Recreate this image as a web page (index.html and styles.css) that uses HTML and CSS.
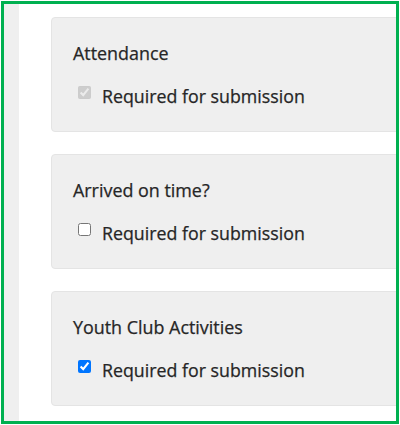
FILE: index.html
```html
<!DOCTYPE html>
<html>
<head>
<meta charset="utf-8">
<link rel="stylesheet" href="styles.css">
</head>
<body>
<div class="frame">
  <div class="sidebar"></div>
  <div class="content">
    <div class="card">
      <div class="title">Attendance</div>
      <label class="req"><input type="checkbox" checked disabled><span>Required for submission</span></label>
    </div>
    <div class="card">
      <div class="title">Arrived on time?</div>
      <label class="req"><input type="checkbox"><span>Required for submission</span></label>
    </div>
    <div class="card">
      <div class="title">Youth Club Activities</div>
      <label class="req"><input type="checkbox" checked><span>Required for submission</span></label>
    </div>
  </div>
</div>
</body>
</html>
```
FILE: styles.css
```css
html, body {
  margin: 0;
  padding: 0;
  background: #fff;
}
body {
  padding: 1px;
  width: 400px;
  height: 425px;
  box-sizing: border-box;
  font-family: "Open Sans", "Liberation Sans", sans-serif;
  color: #262626;
}
.frame {
  box-sizing: border-box;
  height: 423px;
  width: 398px;
  border: 3px solid #00b050;
  display: flex;
  overflow: hidden;
  background: #fff;
}
.sidebar {
  flex: 0 0 15px;
  background: #efefef;
}
.content {
  flex: 1;
  padding: 13px 0 0 32px;
  display: flex;
  flex-direction: column;
  gap: 22px;
  min-width: 0;
}
.card {
  width: 420px;
  flex: 0 0 auto;
  box-sizing: border-box;
  background: #efefef;
  border: 1px solid #e4e4e4;
  border-radius: 4px;
  padding: 24px 22px 23px 21px;
}
.title {
  font-size: 17.9px;
  line-height: 22px;
  font-weight: 400;
  -webkit-text-stroke: 0.25px #262626;
}
.req {
  display: flex;
  align-items: flex-start;
  margin-top: 20px;
  font-size: 17.8px;
  line-height: 24px;
  font-weight: 400;
  -webkit-text-stroke: 0.25px #262626;
}
.req input {
  width: 13px;
  height: 13px;
  margin: 2px 11px 0 5px;
  flex: 0 0 auto;
}
```
